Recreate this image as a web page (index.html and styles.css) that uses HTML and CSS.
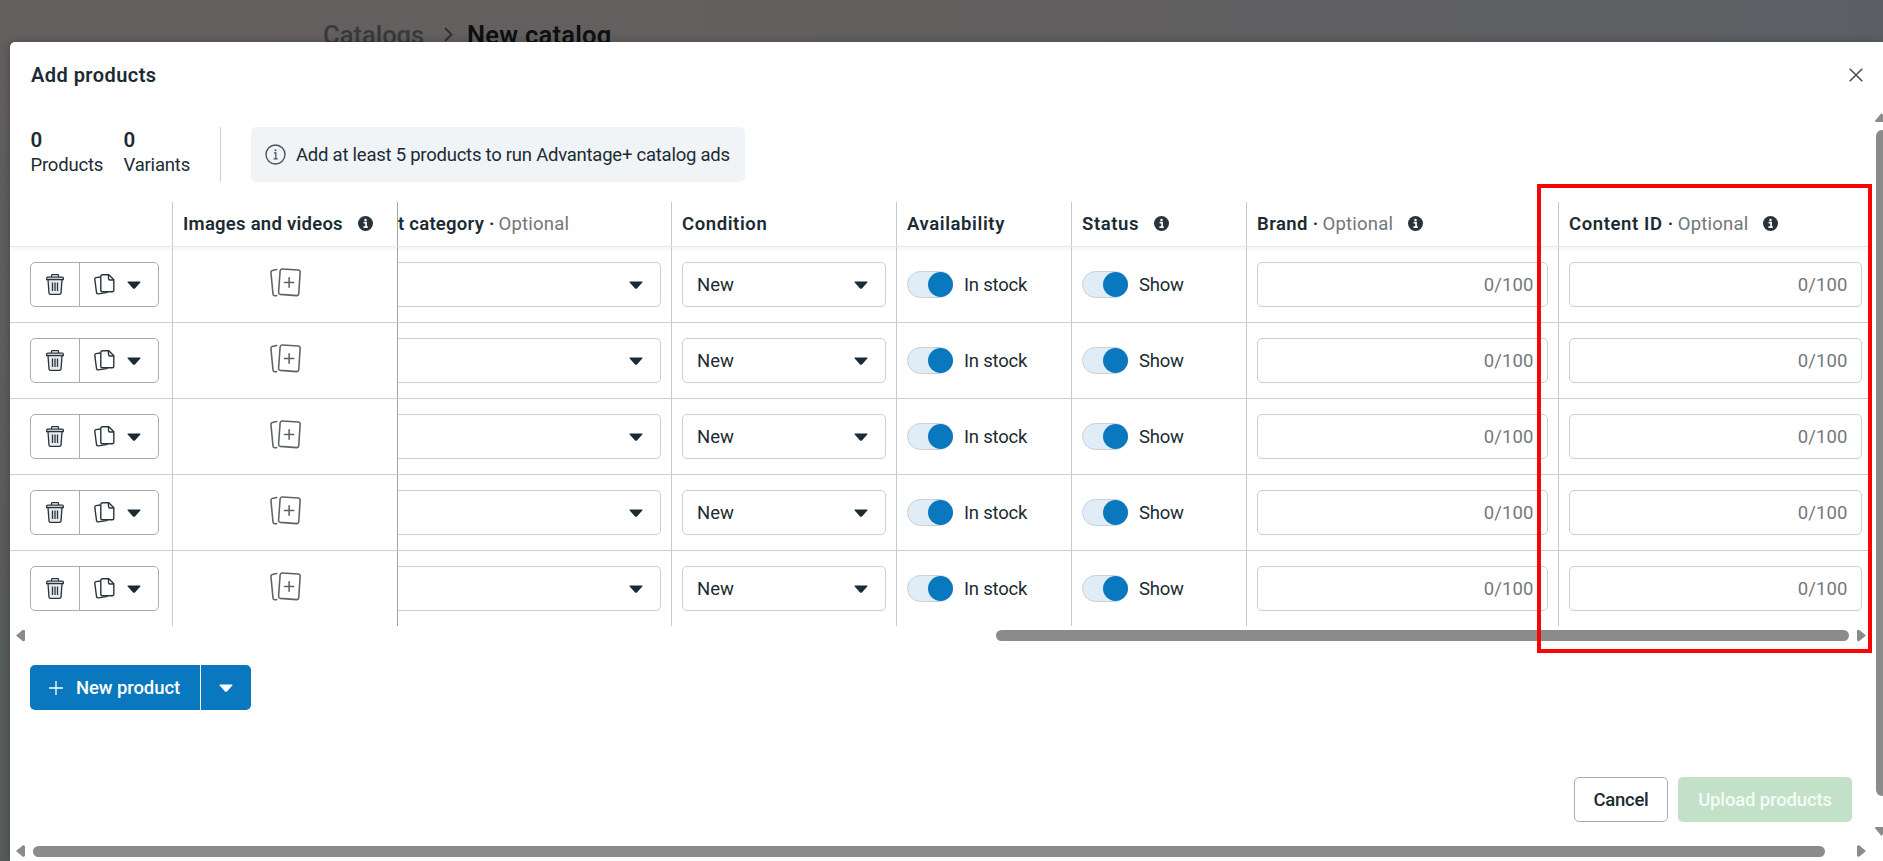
FILE: index.html
```
<!DOCTYPE html>
<html lang="en">
<head>
  <meta charset="UTF-8" />
  <title>Add products</title>
  <link rel="stylesheet" href="styles.css">
</head>
<body>
<svg width="0" height="0" style="display:none">
  <symbol id="info" viewBox="0 0 16 16"><circle cx="8" cy="8" r="8" fill="#28343c"/><path d="M6 7h2.6v4.2M5.8 11.8h4.6" stroke="#fff" stroke-width="1.8" fill="none"/><circle cx="8" cy="4.2" r="1.3" fill="#fff"/></symbol>
  <symbol id="caret" viewBox="0 0 14 8"><path d="M1 .5h12q.8.3.3 1L8.2 7.2q-1.2 1-2.4 0L.7 1.5Q.2.8 1 .5z" fill="currentColor"/></symbol>
  <symbol id="trash" viewBox="0 0 18 21"><path d="M2 6h14l-1 14H3z" fill="#e9edef"/><g fill="none" stroke="#28343c" stroke-width="1.3"><path d="M5.5 3V1.5q0-.8.8-.8h5.400q.8 0 .8.8V3M.7 5.500V4q0-.9.9-.9h14.800q.9 0 .9.9v1.500zM2 5.700l1 13.400q.1 1.200 1.300 1.200h9.400q1.200 0 1.300-1.200l1-13.400M6.500 8.500v8.500M9 8.500v8.500M11.500 8.500v8.500"/></g></symbol>
  <symbol id="copy" viewBox="0 0 21 21"><g fill="none" stroke="#28343c" stroke-width="1.4" stroke-linejoin="round"><path d="M6.300 3L2 3.600Q.7 3.900.8 5.200l1.700 13.300q.3 1.500 1.800 1.400l8-1.300 1.500-.9"/><path d="M8.300.8h6.500l5 5v10.400q0 1.500-1.500 1.500h-10q-1.500 0-1.500-1.500V2.300q0-1.500 1.500-1.500z"/><path d="M14.500.8V4.500q0 1.500 1.500 1.500h3.800"/></g></symbol>
  <symbol id="media" viewBox="0 0 30 28"><g fill="none" stroke="#5c6266" stroke-width="1.5" stroke-linecap="round"><path d="M6.500 1.500L2.200 2.300Q.8 2.700.9 4.200l2 21q.3 1.800 2 1.700l1.500-.2"/><path d="M12 .9l15.500 1q1.800.2 1.700 2L27.800 25q-.2 1.800-2 1.700L10 25.500q-1.800-.2-1.700-2L9.800 2.700Q10 .8 12 .9zM18.500 9.500v9M14 14h9"/></g></symbol>
</svg>

<div class="breadcrumb">
  <span class="parent">Catalogs</span>
  <svg width="9" height="15" viewBox="0 0 9 15"><path d="M1 1l6.500 6.500L1 14" fill="none" stroke="#2d2d2f" stroke-width="1.8"/></svg>
  <span class="current">New catalog</span>
</div>

<div class="modal">
  <div class="modal-header">
    <div class="title">Add products</div>
    <svg class="close" width="14" height="14" viewBox="0 0 14 14"><path d="M.7.7l12.600 12.600M13.300.7L.7 13.300" stroke="#444c50" stroke-width="1.5"/></svg>
  </div>

  <div class="summary">
    <div class="stat products"><b>0</b><span>Products</span></div>
    <div class="stat variants"><b>0</b><span>Variants</span></div>
    <div class="notice">
      <svg width="21" height="21" viewBox="0 0 21 21"><circle cx="10.500" cy="10.500" r="9.500" fill="none" stroke="#4b555c" stroke-width="1.4"/><path d="M9 9h1.800v5.500M8.500 14.800h4.200" fill="none" stroke="#4b555c" stroke-width="1.3"/><circle cx="10.500" cy="6.300" r="1" fill="#4b555c"/></svg>
      <span class="notice-text">Add at least 5 products to run Advantage+ catalog ads</span>
    </div>
  </div>

  <div class="table" id="table">
    <div class="row head">
      <div class="cell"></div>
      <div class="cell pinned"><b class="h-images">Images and videos</b><svg class="info"><use href="#info"/></svg></div>
      <div class="cell category"><b class="h-category">t category ·</b><span class="optional">Optional</span></div>
      <div class="cell"><b>Condition</b></div>
      <div class="cell"><b>Availability</b></div>
      <div class="cell"><b>Status</b><svg class="info"><use href="#info"/></svg></div>
      <div class="cell"><b class="h-brand">Brand ·</b><span class="optional">Optional</span><svg class="info"><use href="#info"/></svg></div>
      <div class="cell"><b>Content ID ·</b><span class="optional">Optional</span><svg class="info"><use href="#info"/></svg></div>
    </div>
  </div>

  <div class="scrollbar inner">
    <i class="arrow left"></i><div class="track"><div class="thumb"></div></div><i class="arrow right"></i>
  </div>

  <div class="new-product">
    <button class="new-btn">
      <svg width="14" height="14" viewBox="0 0 14 14"><path d="M7 0v14M0 7h14" stroke="#fff" stroke-width="1.3"/></svg>
      <span>New product</span>
    </button>
    <button class="new-menu"><svg class="caret"><use href="#caret"/></svg></button>
  </div>

  <div class="modal-footer">
    <button class="cancel-btn">Cancel</button>
    <button class="upload-btn">Upload products</button>
  </div>

  <div class="scrollbar outer">
    <i class="arrow left"></i><div class="track"><div class="thumb"></div></div><i class="arrow right"></i>
  </div>

  <div class="vscroll"><i class="arrow up"></i><div class="thumb"></div><i class="arrow down"></i></div>
</div>

<div class="highlight"></div>

<script>
  const table = document.getElementById('table');
  for (let i = 0; i < 5; i++) {
    const row = document.createElement('div');
    row.className = 'row';
    row.innerHTML = `
      <div class="cell actions">
        <div class="btn-group">
          <button class="trash-btn"><svg width="18" height="21"><use href="#trash"/></svg></button>
          <button class="copy-btn"><svg width="21" height="21"><use href="#copy"/></svg><svg class="caret"><use href="#caret"/></svg></button>
        </div>
      </div>
      <div class="cell pinned media"><svg width="31" height="29"><use href="#media"/></svg></div>
      <div class="cell category"><div class="select"><svg class="caret"><use href="#caret"/></svg></div></div>
      <div class="cell"><div class="select"><span>New</span><svg class="caret"><use href="#caret"/></svg></div></div>
      <div class="cell"><div class="toggle"></div><span class="toggle-label">In stock</span></div>
      <div class="cell"><div class="toggle"></div><span class="toggle-label">Show</span></div>
      <div class="cell"><div class="field"><span>0/100</span></div></div>
      <div class="cell"><div class="field"><span>0/100</span></div></div>
    `;
    table.appendChild(row);
  }
</script>
</body>
</html>
```
FILE: styles.css
```
* {
  box-sizing: border-box;
}
body {
  margin: 0;
  height: 861px;
  overflow: hidden;
  position: relative;
  background:
    linear-gradient(90deg, #656060 0%, #625f5f 50%, #5b5f63 100%) 0 0 / 100% 42px no-repeat,
    linear-gradient(#625e5e, #5c5b5b 60%, #565b5b 75%, #585b5b);
  font-family: Roboto, "Liberation Sans", sans-serif;
  font-size: 18.5px;
  line-height: 24px;
  color: #1c2b33;
}
b, .title {
  font-weight: 600;
}
button {
  font-family: inherit;
  font-size: inherit;
  font-weight: 500;
  color: inherit;
  padding: 0;
  border: none;
  background: none;
}
svg {
  display: block;
  flex: none;
}
span, b {
  white-space: nowrap;
}
.breadcrumb {
  height: 42px;
  padding: 20px 0 0 323px;
  display: flex;
  font-size: 25.5px;
  line-height: 30px;
  letter-spacing: 0.25px;
}
.breadcrumb svg {
  margin: 7px 14px 0 19px;
}
.parent {
  width: 102px;
  color: #39393b;
  font-weight: 500;
  letter-spacing: 0;
}
.current {
  font-weight: 600;
  color: #0d0f12;
}
.modal {
  position: relative;
  margin-left: 10px;
  height: 819px;
  background: #fff;
  border-top-left-radius: 5px;
  box-shadow: 0 0 8px rgba(0,0,0,0.25);
  display: flex;
  flex-direction: column;
}
.modal-header {
  height: 85px;
  padding: 21px 20px 0 21px;
  display: flex;
  justify-content: space-between;
}
.title {
  font-size: 20px;
  letter-spacing: 0.45px;
}
.close {
  margin-top: 5px;
}
.summary {
  height: 75px;
  padding-left: 20.5px;
  display: flex;
}
.stat {
  display: flex;
  flex-direction: column;
  padding-top: 1px;
  line-height: 25px;
  letter-spacing: -0.2px;
}
.stat b {
  font-size: 20.5px;
}
.products {
  width: 93px;
}
.variants {
  width: 97px;
  height: 55px;
  border-right: 1px solid #cbd0d3;
}
.notice {
  margin-left: 30px;
  width: 494px;
  height: 55px;
  padding-left: 14.5px;
  background: #f0f4f7;
  border-radius: 5px;
  display: flex;
  align-items: center;
  gap: 10px;
}
.notice-text {
  letter-spacing: -0.24px;
}
.row {
  display: grid;
  grid-template-columns: 163px 225px 274px 225px 175px 175px 312px 309px;
  height: 76px;
  width: 1858px;
  border-bottom: 1px solid #cbd0d3;
}
.row:last-child {
  height: 75px;
  border-bottom: none;
}
.head {
  height: 45px;
  border-bottom-color: #e6e9eb;
  box-shadow: 0 3px 5px rgba(0,0,0,0.04);
}
.head b {
  letter-spacing: 0.6px;
}
.head .h-images, .head .h-category {
  letter-spacing: 0.25px;
}
.head .h-brand {
  letter-spacing: 0.4px;
}
.cell {
  border-right: 1px solid #c5cacd;
  padding: 0 10px;
  display: flex;
  align-items: center;
  min-width: 0;
}
.cell:last-child {
  border-right: none;
  padding-right: 6px;
}
.pinned {
  border-right-color: #9fa5a9;
}
.head .cell {
  padding-bottom: 1px;
}
.category {
  padding-left: 0;
}
.category .select {
  border-left: none;
  border-radius: 0 5px 5px 0;
}
.optional {
  margin-left: 4px;
  letter-spacing: 0.2px;
  color: #707679;
}
.info {
  width: 15px;
  height: 15px;
  margin-left: 15px;
}
.caret {
  width: 14px;
  height: 8px;
}
.actions {
  padding-left: 20px;
}
.btn-group {
  width: 129px;
  height: 45px;
  display: flex;
  border: 1px solid #a8aeb3;
  border-radius: 5px;
}
.trash-btn {
  width: 49px;
  padding-left: 15px;
  border-right: 1px solid #a8aeb3;
}
.copy-btn {
  padding-left: 14px;
  display: flex;
  align-items: center;
  gap: 12px;
}
.media {
  justify-content: center;
  padding: 0 10px 4px;
}
.select, .field {
  flex: 1;
  height: 45px;
  padding: 0 17px 0 14px;
  border: 1px solid #cbcfd2;
  border-radius: 5px;
  display: flex;
  align-items: center;
}
.select .caret {
  margin-left: auto;
}
.field {
  justify-content: flex-end;
  padding-right: 13.5px;
  color: #74787b;
  letter-spacing: 0.1px;
}
.toggle {
  width: 46px;
  height: 27px;
  margin-right: 11px;
  border-radius: 14px;
  background: #e1edf6;
  border: 1px solid #c8d0d8;
  display: flex;
  align-items: center;
  justify-content: flex-end;
}
.toggle::after {
  content: "";
  width: 25px;
  height: 25px;
  margin-right: -1px;
  border-radius: 50%;
  background: #0a78be;
}
.toggle-label {
  letter-spacing: -0.2px;
}
.scrollbar {
  height: 12px;
  width: 1858px;
  padding: 0 2px 0 6px;
  display: flex;
  align-items: center;
}
.track {
  flex: 1;
}
.thumb {
  background: #8b8b8b;
}
.scrollbar .thumb {
  height: 11px;
  border-radius: 6px;
}
.inner {
  margin-top: 3.5px;
}
.inner .thumb {
  margin-left: 971px;
  width: 853px;
}
.outer {
  margin-top: 23px;
}
.outer .thumb {
  margin-left: 8px;
  width: 1792px;
}
.arrow {
  width: 9px;
  height: 12px;
  background: #8b8b8b;
}
.left {
  clip-path: polygon(0 50%, 80% 0, 100% 8%, 100% 92%, 80% 100%);
}
.right {
  clip-path: polygon(100% 50%, 20% 0, 0 8%, 0 92%, 20% 100%);
}
.vscroll {
  position: absolute;
  left: 1865px;
  top: 71px;
  width: 13px;
}
.vscroll .thumb {
  height: 666px;
  margin: 8px 0 31px 1px;
  border-radius: 6px;
}
.up, .down {
  display: block;
  width: 13px;
  height: 9px;
}
.up {
  clip-path: polygon(50% 0, 0 85%, 4% 100%, 100% 100%);
}
.down {
  clip-path: polygon(50% 100%, 0 15%, 4% 0, 100% 0);
}
.new-product {
  display: flex;
  gap: 1px;
  margin: 23.5px 0 0 20px;
  height: 45px;
  color: #fff;
}
.new-btn {
  width: 170px;
  padding-left: 19px;
  display: flex;
  align-items: center;
  gap: 13px;
  background: #0a78be;
  border-radius: 5px 0 0 5px;
  letter-spacing: -0.1px;
}
.new-menu {
  width: 50px;
  padding-left: 18px;
  background: #0a78be;
  border-radius: 0 5px 5px 0;
}
.modal-footer {
  display: flex;
  justify-content: flex-end;
  gap: 10px;
  margin: 67px 31px 0 0;
  height: 45px;
}
.cancel-btn {
  width: 94px;
  border: 1px solid #a8aeb3;
  border-radius: 5px;
  letter-spacing: -0.3px;
}
.upload-btn {
  width: 174px;
  background: #c3e1c8;
  color: #f4fbf5;
  border-radius: 5px;
  letter-spacing: -0.15px;
}
.highlight {
  position: absolute;
  left: 1537px;
  top: 184px;
  width: 335px;
  height: 469px;
  border: 4px solid #f80505;
}
```
